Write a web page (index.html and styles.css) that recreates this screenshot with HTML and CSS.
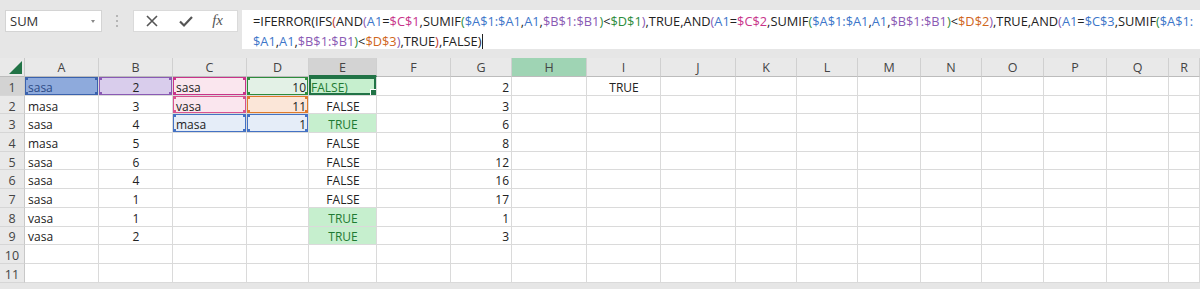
FILE: index.html
```html
<!DOCTYPE html>
<html lang="en">
<head>
    <meta charset="UTF-8">
    <title>Book1 - Excel</title>
    <link rel="stylesheet" href="styles.css">
</head>
<body>
    <div class="toolbar">
        <div class="name-box">
            <span>SUM</span>
            <span class="name-arrow"></span>
        </div>
        <div class="grip"><i></i><i></i><i></i></div>
        <div class="fx-buttons">
            <svg class="fx-icon" width="14" height="14" viewBox="0 0 14 14">
                <path d="M2 2 L12 12 M12 2 L2 12" stroke="#555" stroke-width="1.6" fill="none"/>
            </svg>
            <svg class="fx-icon" width="16" height="14" viewBox="0 0 16 14">
                <path d="M2 7.5 L6 11.5 L14 3" stroke="#555" stroke-width="2.2" fill="none"/>
            </svg>
            <span class="fx-label">fx</span>
        </div>
        <div class="formula">
            <span>=IFERROR(IFS</span><span class="p-red">(</span><span>AND</span><span class="p-purple">(</span><span class="r-blue">A1</span>=<span class="r-pink">$C$1</span>,SUMIF<span class="p-green">(</span><span class="r-blue">$A$1:$A1</span>,<span class="r-blue">A1</span>,<span class="r-purple">$B$1:$B1</span><span class="p-green">)</span>&lt;<span class="r-green">$D$1</span><span class="p-purple">)</span>,TRUE,AND<span class="p-purple">(</span><span class="r-blue">A1</span>=<span class="r-pink">$C$2</span>,SUMIF<span class="p-green">(</span><span class="r-blue">$A$1:$A1</span>,<span class="r-blue">A1</span>,<span class="r-purple">$B$1:$B1</span><span class="p-green">)</span>&lt;<span class="r-orange">$D$2</span><span class="p-purple">)</span>,TRUE,AND<span class="p-purple">(</span><span class="r-blue">A1</span>=<span class="r-blue">$C$3</span>,SUMIF<span class="p-green">(</span><span class="r-blue">$A$1:</span><br><span class="r-blue">$A1</span>,<span class="r-blue">A1</span>,<span class="r-purple">$B$1:$B1</span><span class="p-green">)</span>&lt;<span class="r-orange">$D$3</span><span class="p-purple">)</span>,TRUE<span class="p-red">)</span>,FALSE)<span class="caret"></span>
        </div>
    </div>

    <div class="sheet" id="sheet"></div>

    <script>
        const columns = ['A', 'B', 'C', 'D', 'E', 'F', 'G', 'H', 'I', 'J', 'K', 'L', 'M', 'N', 'O', 'P', 'Q', 'R'];
        const rowCount = 11;

        // cell text and alignment, keyed by address
        const cells = {
            A1: 'sasa', A2: 'masa', A3: 'sasa', A4: 'masa', A5: 'sasa', A6: 'sasa', A7: 'sasa', A8: 'vasa', A9: 'vasa',
            B1: '2', B2: '3', B3: '4', B4: '5', B5: '6', B6: '4', B7: '1', B8: '1', B9: '2',
            C1: 'sasa', C2: 'vasa', C3: 'masa',
            D1: '10', D2: '11', D3: '1',
            E1: 'FALSE)', E2: 'FALSE', E3: 'TRUE', E4: 'FALSE', E5: 'FALSE', E6: 'FALSE', E7: 'FALSE', E8: 'TRUE', E9: 'TRUE',
            G1: '2', G2: '3', G3: '6', G4: '8', G5: '12', G6: '16', G7: '17', G8: '1', G9: '3',
            I1: 'TRUE'
        };

        const align = { B: 'center', D: 'right', E: 'center', G: 'right', I: 'center' };

        const extra = {
            A1: 'ref ref-a1',
            B1: 'ref ref-b1',
            C1: 'ref ref-c1',
            C2: 'ref ref-c2',
            C3: 'ref ref-c3',
            D1: 'ref ref-d1',
            D2: 'ref ref-d2',
            D3: 'ref ref-d3',
            E1: 'active',
            E3: 'good', E8: 'good', E9: 'good'
        };

        function renderSheet() {
            const sheet = document.getElementById('sheet');
            let html = '<div class="corner"><span class="corner-tri"></span></div>';

            html += columns.map(col => {
                let cls = 'col-head';
                if (col === 'E') cls += ' head-active';
                if (col === 'H') cls += ' head-green';
                return `<div class="${cls}">${col}</div>`;
            }).join('');

            for (let r = 1; r <= rowCount; r++) {
                html += `<div class="row-head${r === 1 ? ' head-active' : ''}">${r}</div>`;
                columns.forEach(col => {
                    const addr = col + r;
                    const text = cells[addr] || '';
                    let cls = 'cell';
                    if (align[col] && addr !== 'E1') cls += ' ' + align[col];
                    if (extra[addr]) cls += ' ' + extra[addr];
                    html += `<div class="${cls}">${text}</div>`;
                });
            }

            sheet.innerHTML = html;
        }

        renderSheet();
    </script>
</body>
</html>
```

FILE: styles.css
```css
* {
    margin: 0;
    padding: 0;
    box-sizing: border-box;
}

body {
    background: #e6e6e6;
    font-family: 'Open Sans', 'Noto Sans', sans-serif;
    color: #222;
    overflow: hidden;
}

/* formula bar */

.toolbar {
    display: flex;
    align-items: flex-start;
    height: 58px;
    padding: 10px 0 0 5px;
}

.name-box {
    display: flex;
    align-items: center;
    justify-content: space-between;
    width: 97px;
    height: 22px;
    padding: 0 6px 0 4px;
    background: white;
    border: 1px solid #d4d4d4;
    font-size: 13px;
    color: #333;
}

.name-arrow {
    width: 0;
    height: 0;
    border-left: 2.5px solid transparent;
    border-right: 2.5px solid transparent;
    border-top: 3px solid #888;
}

.grip {
    display: flex;
    flex-direction: column;
    gap: 3px;
    margin: 5px 15px 0 14px;
}

.grip i {
    display: block;
    width: 2px;
    height: 2px;
    background: #b5b5b5;
}

.fx-buttons {
    display: flex;
    align-items: center;
    justify-content: space-between;
    width: 105px;
    height: 22px;
    padding: 0 14px 0 11px;
    background: white;
    border: 1px solid #dadada;
}

.fx-label {
    font-family: 'Liberation Serif', serif;
    font-style: italic;
    font-size: 15px;
    color: #555;
    margin-top: -2px;
}

.formula {
    flex: 1;
    height: 39px;
    margin-left: 4px;
    padding: 1px 0 0 11px;
    background: white;
    font-size: 12.8px;
    line-height: 20px;
    color: #222;
    white-space: nowrap;
}

.caret {
    display: inline-block;
    width: 1px;
    height: 15px;
    background: #222;
    vertical-align: -3px;
    margin-left: 1px;
}

.r-blue { color: #3d76c9; }
.r-pink { color: #c8348a; }
.r-purple { color: #8a5ab4; }
.r-green { color: #2d8c3c; }
.r-orange { color: #d0661c; }
.p-red { color: #c0392b; }
.p-purple { color: #8a5ab4; }
.p-green { color: #2d8c3c; }

/* grid */

.sheet {
    display: grid;
    grid-template-columns: 25px 74px 74px 74px 62px 68px 74px 61px 75px 74px 75px 61px 61px 63px 61px 62px 63px 62px 1fr;
    grid-template-rows: 19px;
    grid-auto-rows: 18.7px;
    background: white;
    font-size: 12px;
}

.corner {
    position: relative;
    background: #e9e9e9;
    border-right: 1px solid #c8c8c8;
    border-bottom: 1px solid #bcbcbc;
}

.corner-tri {
    position: absolute;
    right: 2px;
    bottom: 2px;
    width: 0;
    height: 0;
    border-left: 13px solid transparent;
    border-bottom: 13px solid #217346;
}

.col-head {
    display: flex;
    align-items: center;
    justify-content: center;
    padding-top: 1px;
    background: #e9e9e9;
    border-right: 1px solid #d0d0d0;
    border-bottom: 1px solid #bcbcbc;
    color: #444;
    font-size: 12.5px;
}

.row-head {
    display: flex;
    align-items: center;
    justify-content: center;
    padding-top: 3px;
    background: #e9e9e9;
    border-right: 1px solid #c8c8c8;
    border-bottom: 1px solid #d6d6d6;
    color: #444;
    font-size: 12.5px;
}

.head-active {
    background: #d3d3d3;
}

.col-head.head-active {
    border-bottom: 2px solid #217346;
}

.head-green {
    background: #9fd4b4;
}

.cell {
    display: flex;
    align-items: center;
    padding: 3px 2px 0 3px;
    border-right: 1px solid #dadada;
    border-bottom: 1px solid #dadada;
    white-space: nowrap;
    overflow: hidden;
}

.center {
    justify-content: center;
}

.right {
    justify-content: flex-end;
}

/* formula reference highlights */

.ref {
    --c: #4472c4;
    box-shadow: inset 0 0 0 1px var(--c);
    background-image:
        linear-gradient(var(--c), var(--c)),
        linear-gradient(var(--c), var(--c)),
        linear-gradient(var(--c), var(--c)),
        linear-gradient(var(--c), var(--c));
    background-size: 3px 3px;
    background-position: left top, right top, left bottom, right bottom;
    background-repeat: no-repeat;
}

.ref-a1 {
    --c: #3b62ad;
    background-color: #8eaadc;
    color: #2c4a86;
}

.ref-b1 {
    --c: #8a5ab4;
    background-color: #d9cdec;
}

.ref-c1 {
    --c: #c8348a;
    background-color: #fae6ee;
}

.ref-c2 {
    --c: #d9528f;
    background-color: #fae6ee;
}

.ref-c3,
.ref-d3 {
    --c: #4472c4;
    background-color: #e5edf8;
}

.ref-d1 {
    --c: #2d8c3c;
    background-color: #e3f1e6;
}

.ref-d2 {
    --c: #e07a2c;
    background-color: #fbe6d8;
}

.good {
    background: #c6efce;
    color: #1f7a32;
}

.active {
    position: relative;
    background: #c6efce;
    color: #1f7a32;
    box-shadow: inset 0 0 0 2px #217346;
    padding-left: 2px;
}

.active::after {
    content: '';
    position: absolute;
    right: -1px;
    bottom: -1px;
    width: 5px;
    height: 5px;
    background: #217346;
    border: 1px solid white;
}
```
